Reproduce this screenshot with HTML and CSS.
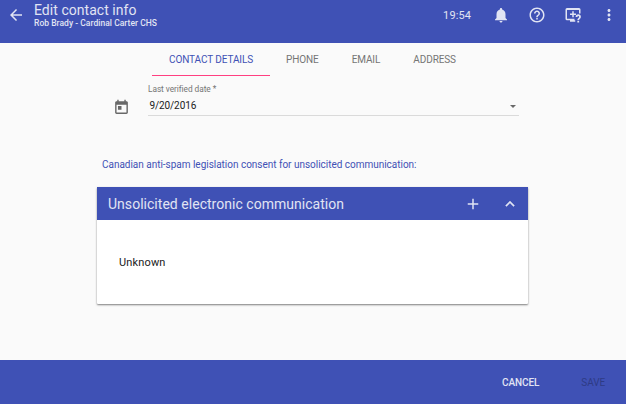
FILE: index.html
```html
<!DOCTYPE html>
<html lang="en">
<head>
<meta charset="utf-8">
<title>Edit contact info</title>
<link rel="stylesheet" href="styles.css">
</head>
<body>
<header class="toolbar">
  <svg class="icon back" viewBox="0 0 24 24"><path d="M20 11H7.83l5.59-5.59L12 4l-8 8 8 8 1.41-1.41L7.83 13H20v-2z"/></svg>
  <div class="heading">
    <h1 class="title">Edit contact info</h1>
    <p class="subtitle">Rob Brady - Cardinal Carter CHS</p>
  </div>
  <time class="clock">19:54</time>
  <nav class="actions">
    <svg class="icon" viewBox="0 0 24 24"><path d="M12 22c1.1 0 2-.9 2-2h-4c0 1.1.89 2 2 2zm6-6v-5c0-3.07-1.64-5.64-4.5-6.32V4c0-.83-.67-1.500-1.500-1.500s-1.500.67-1.500 1.500v.68C7.630 5.360 6 7.920 6 11v5l-2 2v1h16v-1l-2-2z"/></svg>
    <svg class="icon" viewBox="0 0 24 24"><path d="M11 18h2v-2h-2v2zm1-16C6.480 2 2 6.480 2 12s4.480 10 10 10 10-4.480 10-10S17.520 2 12 2zm0 18c-4.410 0-8-3.590-8-8s3.590-8 8-8 8 3.590 8 8-3.590 8-8 8zm0-14c-2.210 0-4 1.790-4 4h2c0-1.100.9-2 2-2s2 .9 2 2c0 2-3 1.750-3 5h2c0-2.250 3-2.500 3-5 0-2.210-1.790-4-4-4z"/></svg>
    <svg class="icon" viewBox="0 0 24 24"><path d="M4 2.700h16a2 2 0 0 1 2 2V10h-2V5.300H4V17h10v2h1v2H8v-2H4a2 2 0 0 1-2-2V4.700a2 2 0 0 1 2-2z"/><path d="M11 7h2v3h3v2h-3v3h-2v-3H8v-2h3z"/><path d="M15.500 14.500a3.500 3.500 0 0 1 7 0c0 2.300-2.300 2.400-2.300 4.200h-2.400c0-2.700 2.300-2.700 2.300-4.200a1.100 1.100 0 0 0-2.200 0zM17.800 19.800h2.400v2.200h-2.400z"/></svg>
    <svg class="icon" viewBox="0 0 24 24"><path d="M12 8c1.100 0 2-.9 2-2s-.9-2-2-2-2 .9-2 2 .9 2 2 2zm0 2c-1.100 0-2 .9-2 2s.9 2 2 2 2-.9 2-2-.9-2-2-2zm0 6c-1.100 0-2 .9-2 2s.9 2 2 2 2-.9 2-2-.9-2-2-2z"/></svg>
  </nav>
</header>
<main class="content">
  <nav class="tabs">
    <a class="tab tab-active">CONTACT DETAILS</a>
    <a class="tab">PHONE</a>
    <a class="tab">EMAIL</a>
    <a class="tab">ADDRESS</a>
  </nav>
  <div class="date-row">
    <svg class="calendar" viewBox="0 0 24 24"><path d="M19 3h-1V1h-2v2H8V1H6v2H5c-1.110 0-1.990.9-1.990 2L3 19c0 1.100.89 2 2 2h14c1.100 0 2-.9 2-2V5c0-1.100-.9-2-2-2zm0 16H5V8h14v11zM7 10h5v5H7z"/></svg>
    <div class="field">
      <label class="label">Last verified date *</label>
      <div class="value"><span class="date">9/20/2016</span><span class="arrow"></span></div>
    </div>
  </div>
  <p class="consent">Canadian anti-spam legislation consent for unsolicited communication:</p>
  <section class="card">
    <div class="card-head">
      <h2 class="card-title">Unsolicited electronic communication</h2>
      <svg class="icon" viewBox="0 0 24 24"><path d="M19 13h-6v6h-2v-6H5v-2h6V5h2v6h6v2z"/></svg>
      <svg class="icon chevron" viewBox="0 0 24 24"><path d="M12 8l-6 6 1.410 1.410L12 10.830l4.590 4.580L18 14z"/></svg>
    </div>
    <p class="card-body">Unknown</p>
  </section>
</main>
<footer class="footer">
  <span class="cancel">CANCEL</span>
  <span class="save">SAVE</span>
</footer>
</body>
</html>
```

FILE: styles.css
```css
* { box-sizing: border-box; }
body {
  margin: 0;
  height: 404px;
  display: flex;
  flex-direction: column;
  overflow: hidden;
  background: #fafafa;
  color: #212121;
  font-family: Roboto, sans-serif;
}
h1, h2, p { margin: 0; font-weight: 400; white-space: nowrap; }
.icon { width: 18px; height: 18px; flex: none; fill: currentColor; }

.toolbar {
  height: 43px;
  flex: none;
  display: flex;
  align-items: flex-start;
  padding: 0 8px 0 7px;
  background: #3f51b5;
  color: #e1e4f3;
}
.back { margin-top: 6px; }
.heading { flex: 1; padding: 2px 0 0 9px; }
.title { font-size: 14px; line-height: 16px; letter-spacing: 0.04px; }
.subtitle { font-size: 8.500px; line-height: 10px; font-weight: 500; letter-spacing: 0.03px; }
.clock { font-size: 11px; line-height: 14px; margin: 9px 21px 0 0; letter-spacing: 0.1px; }
.actions { display: flex; gap: 18px; margin-top: 6px; }

.content { flex: 1; }
.tabs { display: flex; height: 33px; margin-left: 152px; }
.tab {
  padding: 0 16.500px;
  font-size: 10px;
  line-height: 34px;
  letter-spacing: -0.1px;
  color: #757575;
}
.tab-active { width: 118px; padding: 0 0 0 17px; margin-right: -0.500px; color: #3f51b5; border-bottom: 1px solid #ff4081; }

.date-row { display: flex; height: 40px; margin: 0 107px 0 113px; }
.calendar { width: 17px; height: 17px; margin-top: 23px; fill: #686868; }
.field { flex: 1; margin-left: 18px; border-bottom: 1px solid #dadada; }
.label { display: block; padding-top: 8px; font-size: 8.300px; line-height: 11px; letter-spacing: -0.05px; color: #757575; }
.value { display: flex; align-items: center; justify-content: space-between; padding: 4px 3px 0 1.500px; }
.date { font-size: 10px; line-height: 14px; letter-spacing: -0.1px; }
.arrow { border: 3px solid transparent; border-top-color: #686868; border-bottom: 0; }

.consent { margin: 42px 0 0 102px; font-size: 10px; line-height: 14px; letter-spacing: -0.02px; color: #3f51b5; }
.card {
  width: 431px;
  height: 117px;
  margin: 15px 0 0 97px;
  border-radius: 1px;
  background: #fff;
  box-shadow: 0 1px 2px rgba(0, 0, 0, 0.5);
}
.card-head {
  display: flex;
  align-items: center;
  height: 33px;
  padding: 0 9.500px 0 11px;
  background: #3f51b5;
  color: #e1e4f3;
}
.card-title { flex: 1; font-size: 14px; line-height: 18px; letter-spacing: 0.03px; }
.chevron { margin-left: 18.500px; stroke: currentColor; stroke-width: 0.5px; }
.card-body { padding: 35px 22px; font-size: 11px; line-height: 16px; letter-spacing: 0.15px; }

.footer {
  height: 44px;
  flex: none;
  display: flex;
  align-items: center;
  justify-content: flex-end;
  gap: 42px;
  padding-right: 21px;
  background: #3f51b5;
  font-size: 10px;
  letter-spacing: -0.1px;
}
.cancel { color: #e1e4f3; font-weight: 500; }
.save { color: #2e3b85; font-weight: 400; }
```
